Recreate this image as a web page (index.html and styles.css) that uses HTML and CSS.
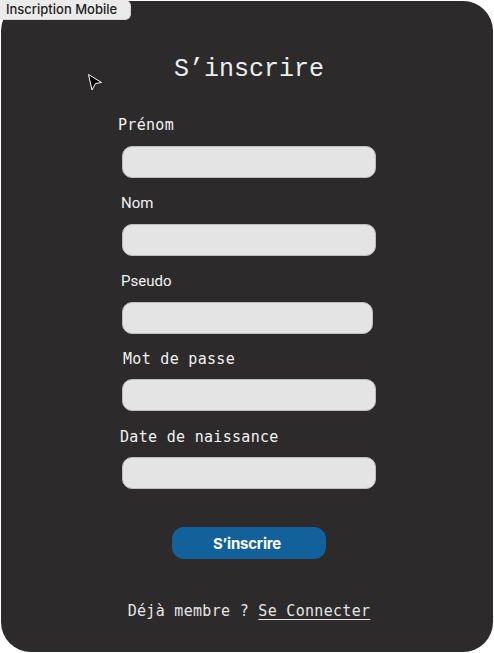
FILE: index.html
```html
<!DOCTYPE html>
<html lang="fr">
<head>
<meta charset="utf-8">
<title>Inscription Mobile</title>
<link rel="stylesheet" href="styles.css">
</head>
<body>
<div class="badge">Inscription Mobile</div>
<main class="frame">
  <svg class="cursor" width="16" height="19" viewBox="0 0 16 19"><path d="M1.5 1.5 L14.5 9.5 L8.5 10.5 L5 17 Z" fill="#000" stroke="#fff" stroke-width="1" stroke-linejoin="miter"/></svg>
  <div class="column">
    <h1 class="title">S’inscrire</h1>
    <form class="form">
      <div class="field">
        <label class="label mono shift-l">Prénom</label>
        <div class="input"></div>
      </div>
      <div class="field">
        <label class="label sans">Nom</label>
        <div class="input"></div>
      </div>
      <div class="field">
        <label class="label sans">Pseudo</label>
        <div class="input input-short"></div>
      </div>
      <div class="field">
        <label class="label mono shift-r shift-down">Mot de passe</label>
        <div class="input"></div>
      </div>
      <div class="field">
        <label class="label mono shift-down">Date de naissance</label>
        <div class="input"></div>
      </div>
    </form>
    <button class="button" type="button">S’inscrire</button>
    <p class="footer">Déjà membre ? <a class="link">Se Connecter</a></p>
  </div>
</main>
</body>
</html>
```

FILE: styles.css
```css
html, body {
  margin: 0;
  padding: 0;
  background: #ffffff;
}

body {
  position: relative;
  width: 494px;
  height: 653px;
  overflow: hidden;
}

.badge {
  position: absolute;
  left: 0;
  top: 0;
  z-index: 2;
  box-sizing: border-box;
  width: 131px;
  height: 20px;
  padding-left: 6px;
  background: #ebebeb;
  border: 1px solid #d6d6d6;
  border-left: none;
  border-top: none;
  border-radius: 0 6px 6px 4px;
  font-family: Inter, "Noto Sans", sans-serif;
  font-weight: 500;
  font-size: 13px;
  line-height: 19px;
  color: #1e1e1e;
  white-space: nowrap;
}

.frame {
  position: relative;
  box-sizing: border-box;
  margin: 1px 0 0 1px;
  width: 492px;
  height: 651px;
  background: #2c2a2b;
  border-radius: 30px;
  padding: 54px 0 0 121px;
}

.cursor {
  position: absolute;
  left: 86px;
  top: 72px;
}

.column {
  width: 254px;
  display: flex;
  flex-direction: column;
  align-items: center;
}

.title {
  margin: 0;
  font-family: "Liberation Mono", "DejaVu Sans Mono", monospace;
  font-weight: 400;
  font-size: 25px;
  line-height: 30px;
  color: #ededed;
}

.form {
  margin: 30px 0 0 0;
  width: 254px;
  display: flex;
  flex-direction: column;
  gap: 14.75px;
}

.field {
  display: flex;
  flex-direction: column;
  gap: 11px;
}

.label {
  height: 20px;
  line-height: 20px;
  color: #f2f2f2;
  margin-left: -2px;
}

.mono {
  font-family: "DejaVu Sans Mono", "Liberation Mono", monospace;
  font-size: 15px;
  letter-spacing: 0.3px;
}

.sans {
  font-family: Roboto, "Noto Sans", sans-serif;
  font-size: 15px;
  margin-left: -1px;
}

.shift-l {
  margin-left: -4px;
}

.shift-r {
  margin-left: 1px;
}

.shift-down {
  position: relative;
  top: 1px;
}

.input {
  box-sizing: border-box;
  width: 254px;
  height: 32px;
  background: #e4e4e4;
  border: 1px solid #bdbdbd;
  border-radius: 10px;
}

.input-short {
  width: 251px;
}

.button {
  margin-top: 38px;
  width: 154px;
  height: 32px;
  border: none;
  border-radius: 12px;
  background: #13619b;
  color: #ffffff;
  font-family: Inter, "Noto Sans", sans-serif;
  font-weight: 700;
  font-size: 15px;
  letter-spacing: -0.2px;
  padding: 0 4px 0 0;
}

.footer {
  margin: 42px 0 0 0;
  font-family: "DejaVu Sans Mono", "Liberation Mono", monospace;
  font-size: 15px;
  letter-spacing: 0.3px;
  line-height: 20px;
  color: #e6e6e6;
  white-space: nowrap;
}

.link {
  text-decoration: underline;
  text-underline-offset: 3px;
}
```
